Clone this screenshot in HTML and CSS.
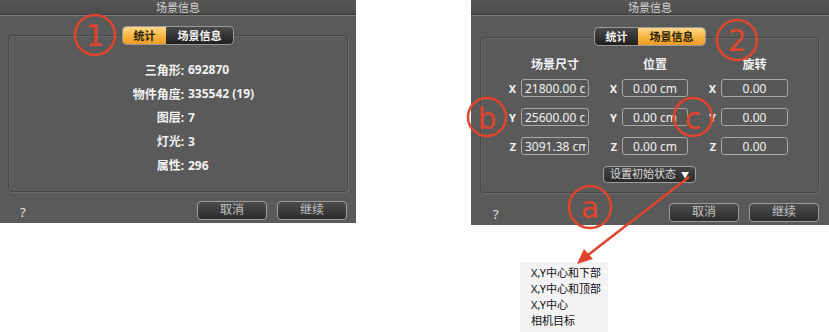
FILE: index.html
```html
<!DOCTYPE html>
<html lang="zh">
    <head>
        <meta charset="UTF-8" />
        <title>场景信息</title>
        <link rel="stylesheet" href="styles.css">
    </head>

    <body>
        <div class="page">
            <!-- 统计 -->
            <div class="dialog dialog-left">
                <div class="titlebar">场景信息</div>
                <div class="tabs">
                    <span class="tab active">统计</span><span class="tab">场景信息</span>
                </div>
                <div class="panel">
                    <div class="stats">
                        <span class="k">三角形:</span><span class="v">692870</span>
                        <span class="k">物件角度:</span><span class="v">335542 (19)</span>
                        <span class="k">图层:</span><span class="v">7</span>
                        <span class="k">灯光:</span><span class="v">3</span>
                        <span class="k">属性:</span><span class="v">296</span>
                    </div>
                </div>
                <div class="footer">
                    <span class="help">?</span>
                    <button class="btn">取消</button>
                    <button class="btn">继续</button>
                </div>
            </div>

            <!-- 场景信息 -->
            <div class="dialog dialog-right">
                <div class="titlebar">场景信息</div>
                <div class="tabs">
                    <span class="tab">统计</span><span class="tab active">场景信息</span>
                </div>
                <div class="panel">
                    <div class="fields">
                        <span></span><span class="head">场景尺寸</span>
                        <span></span><span class="head">位置</span>
                        <span></span><span class="head">旋转</span>

                        <span class="axis">X</span><input class="field left" value="21800.00 cm" readonly />
                        <span class="axis">X</span><input class="field" value="0.00 cm" readonly />
                        <span class="axis">X</span><input class="field" value="0.00" readonly />

                        <span class="axis">Y</span><input class="field left" value="25600.00 cm" readonly />
                        <span class="axis">Y</span><input class="field" value="0.00 cm" readonly />
                        <span class="axis">Y</span><input class="field" value="0.00" readonly />

                        <span class="axis">Z</span><input class="field left" value="3091.38 cm" readonly />
                        <span class="axis">Z</span><input class="field" value="0.00 cm" readonly />
                        <span class="axis">Z</span><input class="field" value="0.00" readonly />
                    </div>
                    <div class="dropdown-row">
                        <button class="dropdown">设置初始状态 <span class="caret">▼</span></button>
                    </div>
                </div>
                <div class="footer">
                    <span class="help">?</span>
                    <button class="btn">取消</button>
                    <button class="btn">继续</button>
                </div>
            </div>

            <!-- 下拉菜单 -->
            <ul class="menu">
                <li>X,Y中心和下部</li>
                <li>X,Y中心和顶部</li>
                <li>X,Y中心</li>
                <li>相机目标</li>
            </ul>

            <!-- 标注 -->
            <svg class="marks" width="829" height="332" viewBox="0 0 829 332">
                <g fill="none" stroke="#e0442c" stroke-width="2.5">
                    <circle cx="95" cy="35" r="20" />
                    <circle cx="737" cy="40" r="20" />
                    <circle cx="487" cy="117" r="19" />
                    <circle cx="693" cy="117" r="19" />
                    <circle cx="590" cy="207" r="21" />
                    <line x1="689" y1="177" x2="588" y2="255" />
                </g>
                <polygon points="577,264 584,249 593,259" fill="#e0442c" />
                <g class="mark-text" fill="#e0442c">
                    <text x="95" y="46">1</text>
                    <text x="737" y="51">2</text>
                    <text x="487" y="129">b</text>
                    <text x="693" y="129">c</text>
                    <text x="590" y="218">a</text>
                </g>
            </svg>
        </div>
    </body>
</html>
```

FILE: styles.css
```css
* {
    margin: 0;
    padding: 0;
    box-sizing: border-box;
}

body {
    background-color: #fdfdfd;
    font-family: 'Noto Sans', 'Noto Sans CJK SC', sans-serif;
}

.page {
    position: relative;
    width: 829px;
    height: 332px;
    display: flex;
    align-items: flex-start;
}

.dialog {
    display: flex;
    flex-direction: column;
    background-color: #5a5a5a;
    color: #f2f2f2;
}
.dialog-left {
    width: 356px;
    height: 223px;
}
.dialog-right {
    width: 358px;
    height: 225px;
    margin-left: 115px;
}

.titlebar {
    height: 16px;
    line-height: 15px;
    text-align: center;
    font-size: 11px;
    color: #d4d4d4;
    background: linear-gradient(#575757, #4c4c4c);
    border-bottom: 1px solid #7c7c7c;
    box-shadow: 0 -1px 0 #3c3c3c inset;
}

/* 分段按钮 */
.tabs {
    position: relative;
    z-index: 1;
    display: flex;
    justify-content: center;
    margin-top: 10px;
}
.dialog-right .tabs {
    margin-top: 11px;
}
.tab {
    height: 19px;
    line-height: 17px;
    font-size: 11px;
    font-weight: bold;
    color: #f4f4f4;
    background: linear-gradient(#4a4a4a, #1f1f1f);
    border: 1px solid #9a9a9a;
    padding: 0 8px;
}
.tab:first-child {
    border-radius: 5px 0 0 5px;
    border-right: none;
    width: 44px;
    text-align: center;
}
.tab:last-child {
    border-radius: 0 5px 5px 0;
    border-left: none;
    width: 68px;
    text-align: center;
}
.tab.active {
    color: #2a2206;
    background: linear-gradient(#fcd88a, #f5b440 55%, #ee9c26);
}

.panel {
    margin: -10px 8px 0;
    height: 157px;
    border: 1px solid #474747;
    border-radius: 4px;
    box-shadow: 1px 1px 0 #6a6a6a, 1px 1px 0 #666 inset;
}
.dialog-right .panel {
    margin: -9px 10px 0 9px;
    height: 156px;
}

/* 统计 */
.stats {
    display: grid;
    grid-template-columns: 175px auto;
    column-gap: 4px;
    grid-auto-rows: 23.8px;
    align-items: center;
    padding-top: 22px;
    font-size: 12px;
    font-weight: bold;
}
.stats .k {
    text-align: right;
}

/* 场景信息 */
.fields {
    display: grid;
    grid-template-columns: 14px 68px 33px 66px 33px 67px;
    grid-template-rows: 12px 18px 18px 18px;
    row-gap: 11px;
    align-items: center;
    padding: 18px 0 0 26px;
    font-size: 12px;
    font-weight: bold;
}
.fields .head {
    align-self: start;
    text-align: center;
    line-height: 12px;
    padding-top: 3px;
}
.axis {
    text-align: right;
    padding-right: 5px;
    font-size: 11px;
}
.field {
    width: 100%;
    height: 18px;
    border: 1px solid #a8a8a8;
    border-radius: 3px;
    background-color: #575757;
    color: #f2f2f2;
    font-family: 'Noto Sans', 'Noto Sans CJK SC', sans-serif;
    font-size: 12px;
    text-align: center;
    outline: none;
    padding: 0 2px;
}
.field.left {
    text-align: left;
    padding-left: 3px;
}

.dropdown-row {
    display: flex;
    justify-content: center;
    margin-top: 11px;
}
.dropdown {
    width: 93px;
    height: 17px;
    border: 1px solid #a0a0a0;
    border-radius: 4px;
    background: linear-gradient(#444, #2b2b2b);
    color: #dcdcdc;
    font-family: 'Noto Sans', 'Noto Sans CJK SC', sans-serif;
    font-size: 11px;
    line-height: 14px;
}
.caret {
    font-size: 8px;
    color: #fff;
    margin-left: 2px;
}

.footer {
    display: flex;
    align-items: center;
    margin-top: 7px;
    padding: 0 9px 0 20px;
}
.dialog-right .footer {
    margin-top: 8px;
    padding: 0 10px 0 22px;
}
.help {
    flex: 1;
    font-size: 13px;
    color: #e4e4e4;
    padding-top: 4px;
}
.btn {
    width: 70px;
    height: 19px;
    margin-left: 10px;
    border: 1px solid #9c9c9c;
    border-radius: 4px;
    background: linear-gradient(#4d4d4d, #2c2c2c);
    color: #c4c4c4;
    font-family: 'Noto Sans', 'Noto Sans CJK SC', sans-serif;
    font-size: 12px;
    line-height: 16px;
}

/* 下拉菜单 */
.menu {
    position: absolute;
    left: 520px;
    top: 262px;
    width: 88px;
    height: 70px;
    list-style: none;
    background-color: #f3f3f3;
    padding: 3px 0 0 11px;
    font-size: 11px;
    color: #111;
}
.menu li {
    height: 16px;
    line-height: 16px;
}

.marks {
    position: absolute;
    left: 0;
    top: 0;
    pointer-events: none;
}
.mark-text text {
    font-family: 'DejaVu Sans', sans-serif;
    font-size: 30px;
    text-anchor: middle;
}
```
